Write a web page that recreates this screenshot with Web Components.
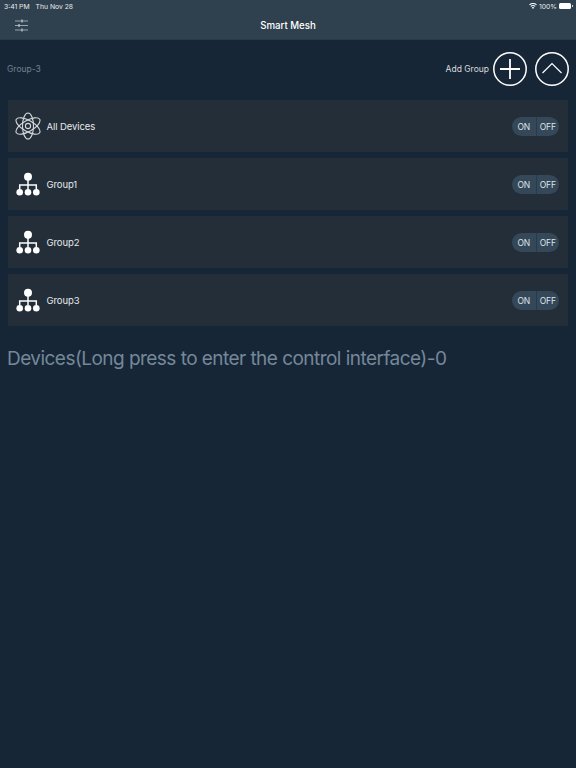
<!DOCTYPE html>
<html lang="en">
<head>
<meta charset="utf-8">
<title>Smart Mesh</title>
<style>
  html, body { margin: 0; height: 100%; background: #172636; }
  body { font-family: Inter, "Liberation Sans", sans-serif; }
</style>
</head>
<body>
<mesh-app></mesh-app>
<script>
const GROUP_ICON = /* html */`
  <svg width="24" height="24" viewBox="0 0 24 24" fill="none">
    <path d="M12 6v11M3.700 17v-4h16.600v4" stroke="#fff" stroke-width="1.500"/>
    <circle cx="12" cy="4.700" r="4" fill="#fff"/>
    <circle cx="3.700" cy="20.300" r="3.300" fill="#fff"/>
    <circle cx="12" cy="20.300" r="3.300" fill="#fff"/>
    <circle cx="20.300" cy="20.300" r="3.300" fill="#fff"/>
  </svg>`;

const ATOM_ICON = /* html */`
  <svg width="26" height="28" viewBox="0 0 26 28" fill="none" stroke="#d5d9dc" stroke-width="1.100">
    <ellipse cx="13" cy="14" rx="5.500" ry="13"/>
    <ellipse cx="13" cy="14" rx="5.500" ry="13.500" transform="rotate(60 13 14)"/>
    <ellipse cx="13" cy="14" rx="5.500" ry="13.500" transform="rotate(-60 13 14)"/>
    <circle cx="13" cy="14" r="2.600"/>
  </svg>`;

class StatusBar extends HTMLElement {
  constructor() {
    super();
    this.attachShadow({ mode: "open" });
    this.shadowRoot.innerHTML = /* html */`
    <style>
      :host {
        display: flex;
        justify-content: space-between;
        align-items: center;
        height: 12px;
        padding: 0 4px;
        font-size: 6.800px;
        color: #e8ecef;
      }
      .left { display: flex; gap: 6px; }
      .right { display: flex; align-items: center; gap: 2px; }
      .battery { width: 12px; height: 6px; background: #fff; border-radius: 1.500px; margin-right: 1px; position: relative; }
      .battery::after {
        content: "";
        position: absolute;
        right: -2px;
        top: 2px;
        width: 1px;
        height: 2px;
        background: #cfd5d9;
      }
    </style>
    <div class="left"><span>3:41 PM</span><span>Thu Nov 28</span></div>
    <div class="right">
      <svg width="8" height="6" viewBox="0 0 18 14" fill="#fff">
        <path d="M9 14 6 10.500a4.600 4.600 0 0 1 6 0zM4.600 8.900 3 7a9.200 9.200 0 0 1 12 0l-1.600 1.900a7 7 0 0 0-8.800 0zM1.600 5.400 0 3.500a14 14 0 0 1 18 0l-1.600 1.900a11.600 11.600 0 0 0-14.800 0z"/>
      </svg>
      <span>100%</span>
      <div class="battery"></div>
    </div>`;
  }
}

class NavBar extends HTMLElement {
  constructor() {
    super();
    this.attachShadow({ mode: "open" });
    this.shadowRoot.innerHTML = /* html */`
    <style>
      :host {
        display: block;
        height: 40px;
        background: #2f404e;
        box-sizing: border-box;
        border-bottom: 1px solid #2a3a47;
      }
      .bar {
        display: grid;
        grid-template-columns: 1fr auto 1fr;
        align-items: center;
        height: 27px;
      }
      .title { font-size: 9.700px; font-weight: 500; color: #fff; }
      svg { margin-left: 15px; display: block; }
    </style>
    <status-bar></status-bar>
    <div class="bar">
      <svg width="13" height="13" viewBox="0 0 13 13" fill="none" stroke="#b6bfc5">
        <path d="M0 2h13M0 6.500h13M0 11h13" stroke-width=".8"/>
        <path d="M7 .5v3M4 5v3M7 9.500v3" stroke-width="1.400"/>
      </svg>
      <div class="title">Smart Mesh</div>
      <div></div>
    </div>`;
  }
}

class CircleButton extends HTMLElement {
  constructor() {
    super();
    this.attachShadow({ mode: "open" });
    const plus = this.getAttribute("icon") === "plus";
    const path = plus ? "M7 17h20M17 7v20" : "M7.500 21 17 11.500 26.500 21";
    this.shadowRoot.innerHTML = /* html */`
    <style>
      :host { display: block; width: 34px; height: 34px; }
      svg { display: block; }
    </style>
    <svg width="34" height="34" viewBox="0 0 34 34" fill="none" stroke="#fff">
      <circle cx="17" cy="17" r="16.200" stroke-width="1.500"/>
      <path d="${path}" stroke-width="${plus ? 1.800 : 1.200}"/>
    </svg>`;
  }
}

class GroupHeader extends HTMLElement {
  constructor() {
    super();
    this.attachShadow({ mode: "open" });
    this.shadowRoot.innerHTML = /* html */`
    <style>
      :host {
        display: flex;
        align-items: center;
        box-sizing: border-box;
        height: 60px;
        padding: 0 7px 3px;
      }
      .count { font-size: 8.500px; color: #6f8290; }
      .add { margin-left: auto; font-size: 8.500px; color: #d8dcdf; margin-right: 4px; }
      circle-button + circle-button { margin-left: 8px; }
    </style>
    <span class="count"><slot></slot></span>
    <span class="add">Add Group</span>
    <circle-button icon="plus"></circle-button>
    <circle-button icon="up"></circle-button>`;
  }
}

class OnOff extends HTMLElement {
  constructor() {
    super();
    this.attachShadow({ mode: "open" });
    this.shadowRoot.innerHTML = /* html */`
    <style>
      :host {
        display: grid;
        grid-template-columns: 1fr 1fr;
        width: 47px;
        height: 19px;
        border-radius: 9.500px;
        background: #34485a;
        overflow: hidden;
        font-size: 8.500px;
        color: #dfe4e7;
      }
      span { display: flex; align-items: center; justify-content: center; padding-top: 1px; }
      span + span { border-left: 1px solid #293a48; }
    </style>
    <span>ON</span><span>OFF</span>`;
  }
}

class MeshRow extends HTMLElement {
  constructor() {
    super();
    this.attachShadow({ mode: "open" });
    const icon = this.hasAttribute("atom") ? ATOM_ICON : GROUP_ICON;
    this.shadowRoot.innerHTML = /* html */`
    <style>
      :host {
        display: flex;
        align-items: center;
        height: 52px;
        margin: 0 8px 6px;
        background: #232e39;
        font-size: 9.500px;
        letter-spacing: -.1px;
        color: #e6e9eb;
      }
      .icon { width: 38px; display: flex; justify-content: center; padding-left: .5px; }
      on-off { margin-left: auto; margin-right: 9px; }
    </style>
    <div class="icon">${icon}</div>
    <span><slot></slot></span>
    <on-off></on-off>`;
  }
}

class DevicesTitle extends HTMLElement {
  constructor() {
    super();
    this.attachShadow({ mode: "open" });
    this.shadowRoot.innerHTML = /* html */`
    <style>
      :host {
        display: block;
        padding: 15px 7px 0;
        font-size: 19px;
        letter-spacing: -.54px;
        line-height: 24px;
        color: #74889a;
      }
    </style>
    <slot></slot>`;
  }
}

class MeshApp extends HTMLElement {
  constructor() {
    super();
    this.attachShadow({ mode: "open" });
    this.shadowRoot.innerHTML = /* html */`
    <style>
      :host { display: block; min-height: 768px; background: #172636; }
    </style>
    <nav-bar></nav-bar>
    <group-header>Group-3</group-header>
    <mesh-row atom>All Devices</mesh-row>
    <mesh-row>Group1</mesh-row>
    <mesh-row>Group2</mesh-row>
    <mesh-row>Group3</mesh-row>
    <devices-title>Devices(Long press to enter the control interface)-0</devices-title>`;
  }
}

customElements.define("status-bar", StatusBar);
customElements.define("nav-bar", NavBar);
customElements.define("circle-button", CircleButton);
customElements.define("group-header", GroupHeader);
customElements.define("on-off", OnOff);
customElements.define("mesh-row", MeshRow);
customElements.define("devices-title", DevicesTitle);
customElements.define("mesh-app", MeshApp);
</script>
</body>
</html>
